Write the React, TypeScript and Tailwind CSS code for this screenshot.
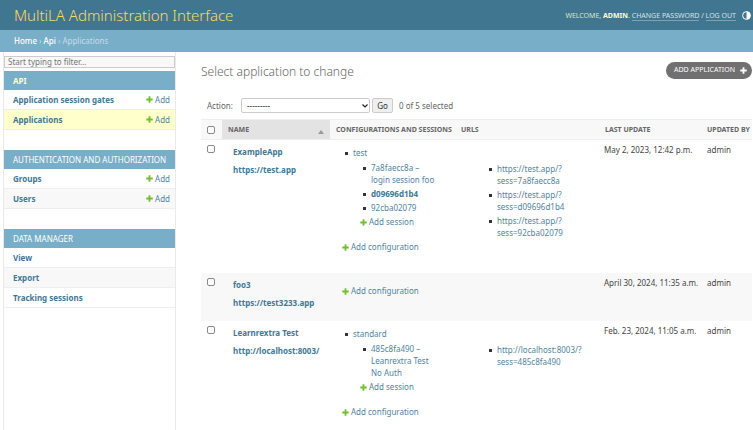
import type { ReactNode } from "react";

type Item = { label: string; add?: boolean; tone?: string };
type Config = { name: string; sessions: { lines: string[]; bold?: boolean }[] };
type Row = {
  name: string;
  url: string;
  configs: Config[];
  urls: string[][];
  updated: string;
  tone: string;
  pad: string;
};

const modules: { title: string; current?: boolean; items: Item[] }[] = [
  {
    title: "API",
    current: true,
    items: [
      { label: "Application session gates", add: true },
      { label: "Applications", add: true, tone: "bg-[#ffffcc]" },
    ],
  },
  {
    title: "AUTHENTICATION AND AUTHORIZATION",
    items: [
      { label: "Groups", add: true },
      { label: "Users", add: true, tone: "bg-[#f8f8f8]" },
    ],
  },
  {
    title: "DATA MANAGER",
    items: [
      { label: "View" },
      { label: "Export", tone: "bg-[#f8f8f8]" },
      { label: "Tracking sessions" },
    ],
  },
];

const rows: Row[] = [
  {
    name: "ExampleApp",
    url: "https://test.app",
    configs: [
      {
        name: "test",
        sessions: [
          { lines: ["7a8faecc8a –", "login session foo"] },
          { lines: ["d09696d1b4"], bold: true },
          { lines: ["92cba02079"] },
        ],
      },
    ],
    urls: [
      ["https://test.app/?", "sess=7a8faecc8a"],
      ["https://test.app/?", "sess=d09696d1b4"],
      ["https://test.app/?", "sess=92cba02079"],
    ],
    updated: "May 2, 2023, 12:42 p.m.",
    tone: "bg-white",
    pad: "pt-[7px] pb-5",
  },
  {
    name: "foo3",
    url: "https://test3233.app",
    configs: [],
    urls: [],
    updated: "April 30, 2024, 11:35 a.m.",
    tone: "bg-[#f8f8f8]",
    pad: "pt-3 pb-6",
  },
  {
    name: "Learnrextra Test",
    url: "http://localhost:8003/",
    configs: [
      {
        name: "standard",
        sessions: [{ lines: ["485c8fa490 –", "Leanrextra Test", "No Auth"] }],
      },
    ],
    urls: [["http://localhost:8003/?", "sess=485c8fa490"]],
    updated: "Feb. 23, 2024, 11:05 a.m.",
    tone: "bg-white",
    pad: "pt-[7px] pb-2",
  },
];

function Plus({ className }: { className: string }) {
  return (
    <svg viewBox="0 0 7 7" className={`h-[7px] w-[7px] shrink-0 ${className}`} aria-hidden="true">
      <path d="M2.6 0.3h1.8v2.3h2.3v1.8H4.4v2.3H2.6V4.4H0.3V2.6h2.3z" fill="currentColor" />
    </svg>
  );
}

function AddLink({ children }: { children: ReactNode }) {
  return (
    <a href="#" className="flex items-center gap-[2px] text-[#5084a0]">
      <Plus className="text-[#70bf2b]" />
      {children}
    </a>
  );
}

function Bullet() {
  return <span className="mt-[5px] mr-[5px] h-[3px] w-[3px] shrink-0 bg-[#333]" />;
}

function Check({ label }: { label: string }) {
  return (
    <input
      type="checkbox"
      aria-label={label}
      className="block h-2 w-2 appearance-none rounded-[2px] border border-[#8a8a8a] bg-white checked:bg-[#417690]"
    />
  );
}

function Sidebar() {
  return (
    <nav className="ml-[3px] w-[173px] shrink-0 border-x border-[#eaeaea] pt-1">
      <input
        type="text"
        aria-label="Filter navigation items"
        placeholder="Start typing to filter…"
        className="mb-[3px] block h-3 w-full border border-[#ccc] bg-[#f8f8f8] px-[3px] text-[8px] text-[#666] outline-none placeholder:text-[#757575]"
      />
      {modules.map((m) => (
        <section key={m.title} className="mb-5">
          <h2
            className={`flex h-[19px] items-center bg-[#79aec8] pl-[9px] text-[8px] whitespace-nowrap ${
              m.current ? "font-bold text-[#ffffcc]" : "text-white"
            }`}
          >
            {m.title}
          </h2>
          <ul>
            {m.items.map((it) => (
              <li
                key={it.label}
                className={`flex h-5 items-center justify-between border-b border-[#eee] pr-[5px] pl-[9px] ${it.tone ?? ""}`}
              >
                <a href="#" className="font-bold text-[#417893]">
                  {it.label}
                </a>
                {it.add && <AddLink>Add</AddLink>}
              </li>
            ))}
          </ul>
        </section>
      ))}
    </nav>
  );
}

function Configurations({ row }: { row: Row }) {
  return (
    <div className={`pl-3 ${row.pad}`}>
      {row.configs.map((c) => (
        <div key={c.name} className="mb-[13px] pl-[3px]">
          <div className="flex">
            <Bullet />
            <a href="#">{c.name}</a>
          </div>
          <div className="mt-[3px] ml-[15px] flex flex-col gap-[2px]">
            <ul className="flex flex-col gap-[2px] pl-[3px]">
              {c.sessions.map((s) => (
                <li key={s.lines[0]} className="flex">
                  <Bullet />
                  <a href="#" className={s.bold ? "font-bold text-[#417893]" : ""}>
                    {s.lines.map((l) => (
                      <span key={l} className="block">
                        {l}
                      </span>
                    ))}
                  </a>
                </li>
              ))}
            </ul>
            <AddLink>Add session</AddLink>
          </div>
        </div>
      ))}
      <AddLink>Add configuration</AddLink>
    </div>
  );
}

function Results() {
  return (
    <table className="w-full table-fixed border-collapse text-left leading-3">
      <colgroup>
        <col className="w-[21px]" />
        <col className="w-[108px]" />
        <col className="w-[125px]" />
        <col />
        <col className="w-[102px]" />
        <col className="w-[51px]" />
      </colgroup>
      <thead className="text-[7px] whitespace-nowrap text-[#666]">
        <tr className="h-5 border-y border-[#eee] bg-[#f8f8f8]">
          <th className="pl-[6px]">
            <Check label="Select all applications" />
          </th>
          <th className="bg-[#e3e3e3] px-[6px]">
            <div className="flex items-center justify-between">
              <a href="#">NAME</a>
              <svg viewBox="0 0 6 4" className="mt-1 h-1 w-[6px]" aria-hidden="true">
                <path d="M3 0L6 4H0z" fill="#999" />
              </svg>
            </div>
          </th>
          <th className="pl-[6px]">CONFIGURATIONS AND SESSIONS</th>
          <th className="pl-[6px]">URLS</th>
          <th className="pl-[6px]">LAST UPDATE</th>
          <th className="pl-[6px]">UPDATED BY</th>
        </tr>
      </thead>
      <tbody className="text-[#5084a0]">
        {rows.map((r) => (
          <tr key={r.name} className={`align-top ${r.tone}`}>
            <td className="pt-[5px] pl-[6px]">
              <Check label={`Select ${r.name}`} />
            </td>
            <th className="pt-[6px] pl-[11px] font-bold whitespace-nowrap text-[#417893]">
              <a href="#" className="block">
                {r.name}
              </a>
              <a href="#" className="mt-[6px] block">
                {r.url}
              </a>
            </th>
            <td>
              <Configurations row={r} />
            </td>
            <td className="pt-[23px] pl-[34px]">
              <ul className="flex flex-col gap-[2px]">
                {r.urls.map((u) => (
                  <li key={u[1]} className="flex">
                    <Bullet />
                    <a href="#">
                      {u.map((l) => (
                        <span key={l} className="block">
                          {l}
                        </span>
                      ))}
                    </a>
                  </li>
                ))}
              </ul>
            </td>
            <td className="pt-1 pl-[5px] whitespace-nowrap text-[#444]">{r.updated}</td>
            <td className="pt-1 pl-[6px] text-[#444]">admin</td>
          </tr>
        ))}
      </tbody>
    </table>
  );
}

export default function App() {
  return (
    <div className="flex min-h-screen flex-col bg-white font-['Noto_Sans',sans-serif] text-[8px] text-[#666]">
      <header className="flex h-[30px] items-center justify-between bg-[#417690] pr-[2px] pl-[14px]">
        <h1 className="text-[15px] font-light text-[#f5dd5d]">MultiLA Administration Interface</h1>
        <div className="flex items-center gap-[6px] text-[7px] leading-[9px] text-[#d5e6c8]">
          <div>
            WELCOME, <strong className="text-[#ffffcc]">ADMIN</strong>.{" "}
            <a href="#" className="border-b border-[#7fa2b3] text-[#d3e2ea]">
              CHANGE PASSWORD
            </a>
            {" / "}
            <a href="#" className="border-b border-[#7fa2b3] text-[#d3e2ea]">
              LOG OUT
            </a>
          </div>
          <button type="button" aria-label="Toggle theme">
            <svg viewBox="0 0 9 9" className="block h-[9px] w-[9px]">
              <circle cx="4.5" cy="4.5" r="3.9" fill="none" stroke="white" strokeWidth="1" />
              <path d="M4.5 0.6a3.9 3.9 0 0 1 0 7.8z" fill="white" />
            </svg>
          </button>
        </div>
      </header>
      <nav className="flex h-[22px] items-center gap-[2px] bg-[#79aec8] pl-[14px] text-[#c4dce8]">
        <a href="#" className="font-medium text-white">
          Home
        </a>
        ›
        <a href="#" className="font-medium text-white">
          Api
        </a>
        › <span>Applications</span>
      </nav>
      <div className="flex flex-1">
        <Sidebar />
        <main className="min-w-0 flex-1 pr-px pl-[25px]">
          <div className="flex h-[46px] items-start justify-between pt-[10px]">
            <h2 className="pt-px text-[12px] leading-[18px] font-light text-[#666]">
              Select application to change
            </h2>
            <a
              href="#"
              className="flex h-[17px] items-center gap-[5px] rounded-full bg-[#707070] pr-[5px] pl-2 text-[7px] text-white"
            >
              ADD APPLICATION <Plus className="text-white" />
            </a>
          </div>
          <div className="flex h-[21px] items-start pl-[6px]">
            <label htmlFor="action" className="w-[34px] leading-[15px]">
              Action:
            </label>
            <div className="relative">
              <select
                id="action"
                className="block h-[15px] w-[129px] appearance-none rounded-[2px] border border-[#ccc] bg-white pl-[5px] text-[8px] text-[#222]"
              >
                <option>---------</option>
              </select>
              <svg
                viewBox="0 0 6 4"
                className="pointer-events-none absolute top-[6px] right-[2px] h-1 w-[6px]"
                aria-hidden="true"
              >
                <path d="M0.5 0.5L3 3L5.5 0.5" fill="none" stroke="#222" strokeWidth="1.2" />
              </svg>
            </div>
            <button
              type="button"
              className="ml-[2px] h-[15px] w-[21px] rounded-[2px] border border-[#ccc] bg-[#efefef] text-[8px] leading-3 text-[#333]"
            >
              Go
            </button>
            <span className="ml-[6px] leading-[15px]">0 of 5 selected</span>
          </div>
          <Results />
        </main>
      </div>
    </div>
  );
}
